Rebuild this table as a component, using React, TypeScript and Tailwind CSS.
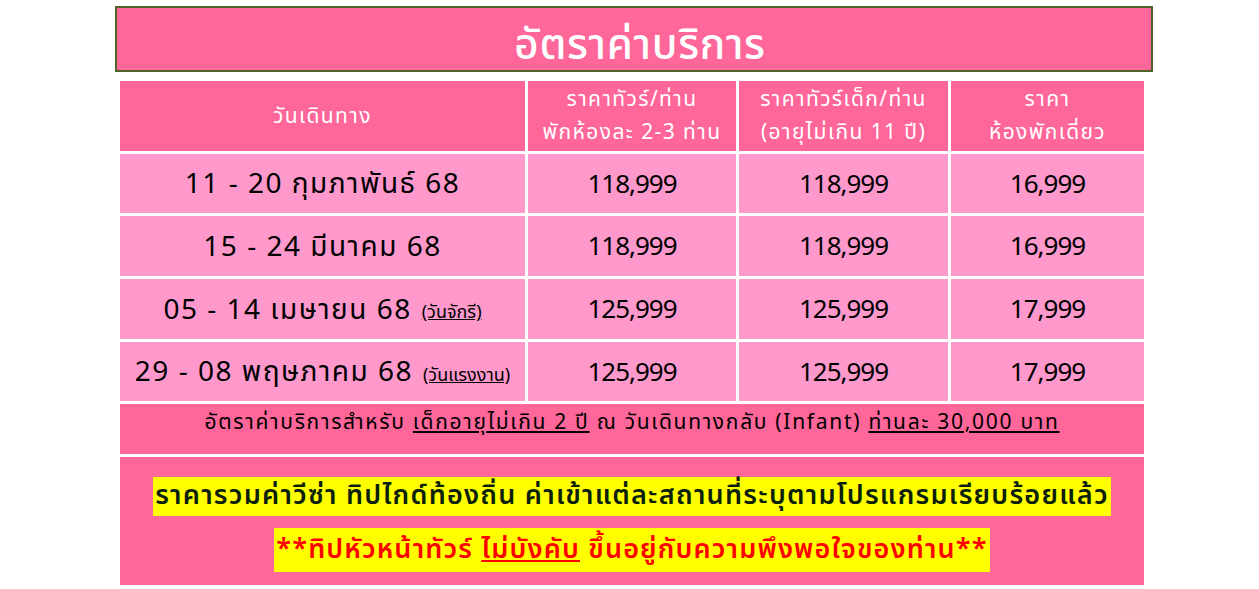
import React from "react";

const font = { fontFamily: "'Noto Sans Thai', 'Noto Sans Thai UI', 'Noto Sans', 'Open Sans', sans-serif" };

const rows = [
  { date: "11 - 20 กุมภาพันธ์ 68", note: "", a: "118,999", b: "118,999", c: "16,999", h: "h-[59px]" },
  { date: "15 - 24 มีนาคม 68", note: "", a: "118,999", b: "118,999", c: "16,999", h: "h-[60px]" },
  { date: "05 - 14 เมษายน 68", note: "(วันจักรี)", a: "125,999", b: "125,999", c: "17,999", h: "h-[60px]" },
  { date: "29 - 08 พฤษภาคม 68", note: "(วันแรงงาน)", a: "125,999", b: "125,999", c: "17,999", h: "h-[59px]" },
];

const num = "bg-[#ff99cc] flex items-center justify-center text-black text-[26px] tracking-[-1px]";
const head = "h-[70px] bg-[#ff6699] flex flex-col items-center justify-center text-white text-[21px] tracking-[1.4px] leading-[33px]";

export default function App() {
  return (
    <div className="w-[1259px] h-[589px] bg-white pt-[6px]" style={font}>
      <div className="ml-[115px] w-[1038px] h-[66px] bg-[#ff6699] border-2 border-[#4f6228] flex items-center justify-center">
        <span className="text-[42px] font-medium tracking-[0.7px] text-white leading-none pt-[14px] pl-[12px]">อัตราค่าบริการ</span>
      </div>
      <div className="ml-[120px] mt-[9px] w-[1024px] grid grid-cols-[405px_208px_209px_193px] gap-[3px]">
        <div className={head}>วันเดินทาง</div>
        <div className={head}>
          <span>ราคาทัวร์/ท่าน</span>
          <span>พักห้องละ 2-3 ท่าน</span>
        </div>
        <div className={head}>
          <span>ราคาทัวร์เด็ก/ท่าน</span>
          <span>(อายุไม่เกิน 11 ปี)</span>
        </div>
        <div className={head}>
          <span>ราคา</span>
          <span>ห้องพักเดี่ยว</span>
        </div>
        {rows.map((r) => (
          <React.Fragment key={r.date}>
            <div className={`${r.h} bg-[#ff99cc] flex items-center justify-center text-black text-[28px] tracking-[1.5px] pt-[3px]`}>
              <span>{r.date}</span>
              {r.note && <span className="ml-[10px] text-[18px] tracking-[0px] underline pt-[4px]">{r.note}</span>}
            </div>
            <div className={`${r.h} ${num} pt-[3px]`}>{r.a}</div>
            <div className={`${r.h} ${num} pt-[3px]`}>{r.b}</div>
            <div className={`${r.h} ${num} pt-[3px]`}>{r.c}</div>
          </React.Fragment>
        ))}
        <div className="col-span-4 h-[50px] bg-[#ff6699] flex justify-center pt-[2px] text-black text-[21px] tracking-[1.7px] leading-[34px]">
          <span>
            อัตราค่าบริการสำหรับ <span className="underline">เด็กอายุไม่เกิน 2 ปี</span> ณ วันเดินทางกลับ (Infant){" "}
            <span className="underline">ท่านละ 30,000 บาท</span>
          </span>
        </div>
        <div className="col-span-4 h-[128px] bg-[#ff6699] flex flex-col items-center pt-[20px] gap-[12px]">
          <span className="bg-[#ffff00] h-[39px] flex items-center px-[2px] text-[#0b1f0b] text-[27px] tracking-[1.25px] font-semibold">
            ราคารวมค่าวีซ่า ทิปไกด์ท้องถิ่น ค่าเข้าแต่ละสถานที่ระบุตามโปรแกรมเรียบร้อยแล้ว
          </span>
          <span className="bg-[#ffff00] h-[44px] flex items-center px-[2px] text-[#ff0000] text-[27px] tracking-[1.15px] font-semibold">
            **ทิปหัวหน้าทัวร์&nbsp;<span className="underline">ไม่บังคับ</span>&nbsp;ขึ้นอยู่กับความพึงพอใจของท่าน**
          </span>
        </div>
      </div>
    </div>
  );
}
